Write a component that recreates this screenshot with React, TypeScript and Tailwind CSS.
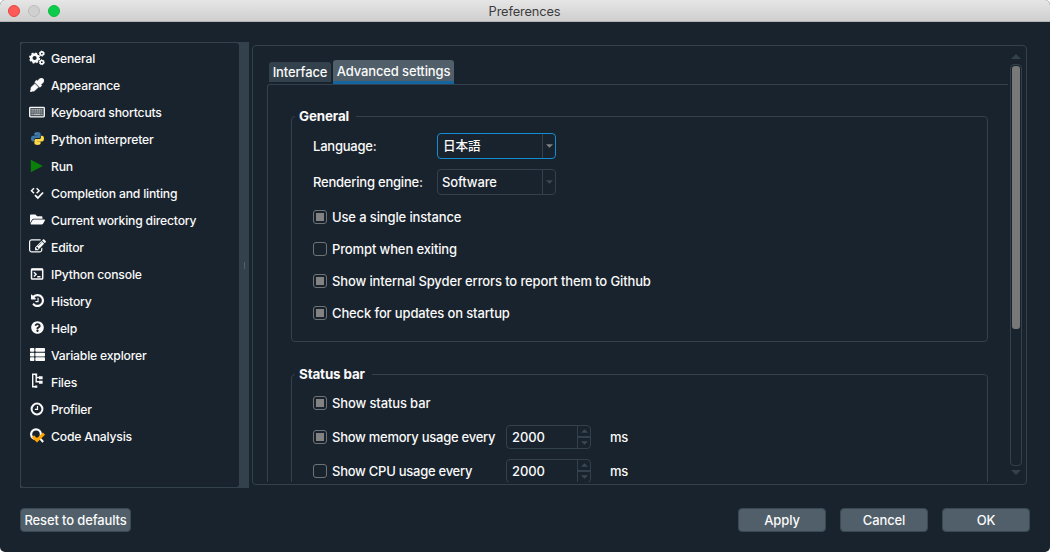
import type { ReactNode } from "react";
import { FaEyeDropper, FaFolderOpen, FaQuestionCircle, FaThList } from "react-icons/fa";

function GearsIcon() {
  return (
    <svg width="16" height="16" viewBox="0 0 16 16" fill="none" stroke="currentColor">
      <circle cx="5.600" cy="8" r="3.400" strokeWidth="2.600" />
      <circle cx="5.600" cy="8" r="4.700" strokeWidth="1.800" strokeDasharray="1.900 1.791" />
      <circle cx="12.800" cy="3.600" r="1.700" strokeWidth="1.600" />
      <circle cx="12.800" cy="3.600" r="2.500" strokeWidth="1" strokeDasharray="1.300 1.318" />
      <circle cx="12.800" cy="12.200" r="1.700" strokeWidth="1.600" />
      <circle cx="12.800" cy="12.200" r="2.500" strokeWidth="1" strokeDasharray="1.300 1.318" />
    </svg>
  );
}

function KeyboardIcon() {
  return (
    <svg width="16" height="12" viewBox="0 0 16 12" fill="none" stroke="currentColor">
      <rect x="0.700" y="1.400" width="14.600" height="9.400" rx="0.800" strokeWidth="1.300" fill="#4d555d" />
      <path d="M2.500 3.900h11M2.500 6h11" strokeWidth="1.100" strokeDasharray="1.300 0.500" opacity="0.750" />
      <path d="M2.500 8.300h1.300M4.500 8.300h7M12.200 8.300h1.300" strokeWidth="1.100" opacity="0.850" />
    </svg>
  );
}

function EditIcon() {
  return (
    <svg width="17" height="17" viewBox="0 0 1792 1792" fill="currentColor" className="shrink-0">
      <path d="M888 1184l116-116-152-152-116 116v56h96v96h56zm440-720q-16-16-33 1l-350 350q-17 17-1 33t33-1l350-350q17-17 1-33zm80 594v190q0 119-84.500 203.500t-203.500 84.500h-832q-119 0-203.500-84.500t-84.500-203.500v-832q0-119 84.500-203.500t203.500-84.500h832q63 0 117 25 15 7 18 23 3 17-9 29l-49 49q-14 14-32 8-23-6-45-6h-832q-66 0-113 47t-47 113v832q0 66 47 113t113 47h832q66 0 113-47t47-113v-126q0-13 9-22l64-64q15-15 35-7t20 29zm-96-738l288 288-672 672h-288v-288zm444 132l-92 92-288-288 92-92q28-28 68-28t68 28l152 152q28 28 28 68t-28 68z" />
    </svg>
  );
}

function HistoryIcon() {
  return (
    <svg width="13" height="13" viewBox="0 -128 1536 1536" fill="currentColor">
      <path d="M1536 640q0 156-61 298t-164 245-245 164-298 61q-172 0-327-72.500t-264-204.500q-7-10-6.500-22.500t8.500-20.500l137-138q10-9 25-9 16 2 23 12 73 95 179 147t225 52q104 0 198.500-40.500t163.500-109.500 109.500-163.500 40.500-198.500-40.500-198.500-109.500-163.500-163.500-109.500-198.500-40.500q-98 0-188 35.500t-160 101.500l137 138q31 30 14 69-17 40-59 40h-448q-26 0-45-19t-19-45v-448q0-42 40-59 39-17 69 14l130 129q107-101 244.500-156.500t284.500-55.500q156 0 298 61t245 164 164 245 61 298zm-640-288v448q0 14-9 23t-23 9h-320q-14 0-23-9t-9-23v-64q0-14 9-23t23-9h224v-352q0-14 9-23t23-9h64q14 0 23 9t9 23z" />
    </svg>
  );
}

function PythonIcon() {
  return (
    <svg width="13" height="13" viewBox="0 0 24 24">
      <path
        fill="#3a77a8"
        d="M11.900 0C8 0 6.300 1.500 6.300 3.200v2.600h5.800v.9H3.600C1.700 6.700 0 8.500 0 12s1.500 5.400 3.400 5.400h2.200v-2.900c0-1.900 1.600-3.300 3.500-3.300h5.800c1.600 0 2.800-1.300 2.800-2.900V3.200C17.700 1.500 15.800 0 11.900 0z"
      />
      <path
        fill="#ffd845"
        d="M18.400 6.700v2.800c0 2-1.600 3.600-3.500 3.600H9.100c-1.600 0-2.800 1.300-2.800 2.900v4.900c0 1.700 1.900 3.100 5.700 3.100s5.700-1.500 5.700-3.100v-2.600h-5.800v-.9h8.700C22.500 17.400 24 15.600 24 12s-1.500-5.300-3.400-5.300z"
      />
      <path fill="#3a77a8" d="M6.300 5.800h5.800v.9H6.300z" />
      <path fill="#ffd845" d="M11.900 17.400h5.800v.9h-5.800z" />
      <circle cx="8.800" cy="2.900" r="0.900" fill="#9dbbd3" />
      <circle cx="15.200" cy="21.100" r="0.900" fill="#fff0b0" />
    </svg>
  );
}

function RunIcon() {
  return (
    <svg width="14" height="14" viewBox="0 0 14 14">
      <path d="M0.800 0.800l12 6.200-12 6.200z" fill="#0a800a" />
    </svg>
  );
}

function LintIcon() {
  return (
    <svg width="14" height="14" viewBox="0 0 14 14" fill="none" stroke="currentColor" strokeWidth="1.500">
      <path d="M4 2.300L1.500 4.800 4 7.300M6.600 2.300l2.500 2.500-2.500 2.500" />
      <path d="M5 9.100l2.800 2.900 5.300-5.500" strokeWidth="1.800" />
    </svg>
  );
}

function ConsoleIcon() {
  return (
    <svg width="14" height="14" viewBox="0 0 14 14" fill="none" stroke="currentColor">
      <rect x="1.500" y="2.100" width="11.200" height="10" rx="0.800" strokeWidth="1.500" />
      <path d="M1.300 2.600h11.600" strokeWidth="1.900" />
      <path d="M3.900 5.200l2.200 2.100-2.200 2.100M7.200 9.700h3.300" strokeWidth="1.400" />
    </svg>
  );
}

function FilesIcon() {
  return (
    <svg width="15" height="17" viewBox="0 0 15 17" fill="none" stroke="currentColor" strokeWidth="1.400">
      <path d="M5.500 1.200H2.700v12.500h2.800M6.200 1.200v8.300M6.200 4.500h4M6.200 8.800h4" />
      <path d="M5.200 1.600h2M4.800 13.600h2.500" strokeWidth="2.200" />
      <path d="M9 4.700h3.600M9 9.200h3.600" strokeWidth="3" />
    </svg>
  );
}

function ClockIcon() {
  return (
    <svg width="14" height="14" viewBox="0 0 14 14" fill="none" stroke="currentColor">
      <circle cx="7" cy="7" r="5.400" strokeWidth="2" />
      <path d="M7.500 3.900v3.500H4.900" strokeWidth="1.200" />
    </svg>
  );
}

function AnalysisIcon() {
  return (
    <svg width="16" height="15" viewBox="0 0 16 15" fill="none" className="shrink-0">
      <circle cx="7" cy="6.300" r="4.900" stroke="#fafafa" strokeWidth="2.200" />
      <path d="M11 10.500l3.200 3.500" stroke="#fafafa" strokeWidth="2" />
      <path d="M4 8.400l4 3.900 7-6.600" stroke="#ffa500" strokeWidth="3" />
    </svg>
  );
}

const pages: { label: string; icon: ReactNode }[] = [
  { label: "General", icon: <GearsIcon /> },
  { label: "Appearance", icon: <FaEyeDropper size={14} stroke="currentColor" strokeWidth={16} /> },
  { label: "Keyboard shortcuts", icon: <KeyboardIcon /> },
  { label: "Python interpreter", icon: <PythonIcon /> },
  { label: "Run", icon: <RunIcon /> },
  { label: "Completion and linting", icon: <LintIcon /> },
  { label: "Current working directory", icon: <FaFolderOpen size={15} /> },
  { label: "Editor", icon: <EditIcon /> },
  { label: "IPython console", icon: <ConsoleIcon /> },
  { label: "History", icon: <HistoryIcon /> },
  { label: "Help", icon: <FaQuestionCircle size={13} /> },
  { label: "Variable explorer", icon: <FaThList size={15} /> },
  { label: "Files", icon: <FilesIcon /> },
  { label: "Profiler", icon: <ClockIcon /> },
  { label: "Code Analysis", icon: <AnalysisIcon /> },
];

function Arrow({ down = false, className }: { down?: boolean; className: string }) {
  return (
    <svg viewBox="0 0 10 5" className={className} fill="currentColor">
      <path d={down ? "M0 0h10L5 5z" : "M0 5h10L5 0z"} />
    </svg>
  );
}

function Check({ label, checked = false }: { label: string; checked?: boolean }) {
  return (
    <div className="flex items-center gap-[5px]">
      <span className="flex size-[14px] items-center justify-center rounded-[3px] border border-[#6d7275]">
        {checked && <span className="size-2 bg-[#828282]" />}
      </span>
      <span className="pt-px">{label}</span>
    </div>
  );
}

function Combo({ value, active = false }: { value: string; active?: boolean }) {
  return (
    <div
      className={
        active
          ? "flex h-[26px] w-[119px] rounded-[4px] border border-[#148cd2] text-[12.600px] font-medium"
          : "flex h-[26px] w-[119px] rounded-[4px] border border-[#32414b]"
      }
    >
      <span className={active ? "flex flex-1 items-center pt-px pl-[5px]" : "flex flex-1 items-center pt-[2px] pl-1"}>
        {value}
      </span>
      <span
        className={
          active
            ? "flex w-[13px] items-center justify-center border-l border-[#32414b] text-[#828282]"
            : "flex w-[13px] items-center justify-center border-l border-[#32414b] text-[#3a4953]"
        }
      >
        <Arrow down className="h-1 w-[7px]" />
      </span>
    </div>
  );
}

function Spin({ value }: { value: string }) {
  return (
    <div className="flex h-6 w-[85px] rounded-[4px] border border-[#32414b]">
      <span className="flex flex-1 items-center pt-px pl-[5px]">{value}</span>
      <span className="flex w-[13px] flex-col border-l border-[#32414b] text-[#3a4953]">
        <span className="flex h-[12px] items-center justify-center border-b-2 border-[#32414b]">
          <Arrow className="h-1 w-[7px]" />
        </span>
        <span className="flex h-[10px] items-center justify-center">
          <Arrow down className="h-1 w-[7px]" />
        </span>
      </span>
    </div>
  );
}

function Interval({ label, checked = false }: { label: string; checked?: boolean }) {
  return (
    <div className="flex h-[34px] items-center">
      <div className="w-[193px] tracking-[-0.020em]">
        <Check label={label} checked={checked} />
      </div>
      <Spin value="2000" />
      <span className="ml-[19px] pt-px tracking-[-0.030em]">ms</span>
    </div>
  );
}

function Button({ label, className }: { label: string; className: string }) {
  return (
    <button
      className={`flex h-6 items-center justify-center rounded-[4px] border border-[#3b4953] bg-[#505f69] pt-[2px] ${className}`}
    >
      {label}
    </button>
  );
}

function Legend({ children }: { children: string }) {
  return (
    <legend className="ml-[3px] h-[18px] pr-[7px] pl-1 text-[13.400px] leading-[18px] font-bold tracking-[-0.010em]">
      {children}
    </legend>
  );
}

export default function App() {
  return (
    <div className="h-[552px] w-[1050px] overflow-hidden bg-white font-['Inter','Noto_Sans_CJK_JP',sans-serif] text-[13px] font-[450] tracking-[-0.010em] text-[#fafafa]">
      <div className="flex h-full flex-col overflow-hidden rounded-[5px] bg-[#19232d]">
        <header className="flex h-[22px] shrink-0 items-center border-b border-[#b4b4b4] bg-gradient-to-b from-[#e6e6e6] to-[#cfcfcf]">
          <div className="flex w-[80px] gap-2 pl-2">
            <span className="size-3 rounded-full border border-[#e2463f] bg-[#fc5b57]" />
            <span className="size-3 rounded-full border border-[#bcbcbc] bg-[#d0d0d0]" />
            <span className="size-3 rounded-full border border-[#13b83f] bg-[#0bcd4b]" />
          </div>
          <h1 className="flex-1 pt-[2px] pr-[81px] text-center text-[12.800px] font-normal text-[#3c3c3c]">Preferences</h1>
        </header>

        <div className="flex h-[466px] shrink-0 pl-5">
          <aside className="mt-5 h-[446px] w-[229px] bg-[#32414b] py-px pl-px">
            <div className="flex h-full">
              <ul className="h-full w-[218px] rounded-[3px] bg-[#19232d] pt-[2px] text-[12.200px] tracking-[-0.016em]">
                {pages.map((page) => (
                  <li key={page.label} className="flex h-[27px] items-center pl-2">
                    <span className="flex w-4 items-center justify-center pb-[2px]">{page.icon}</span>
                    <span className="ml-[6px] pt-px">{page.label}</span>
                  </li>
                ))}
              </ul>
              <div className="flex flex-1 items-center justify-center">
                <span className="h-[7px] w-px bg-[#505f69]" />
              </div>
            </div>
          </aside>

          <main className="mt-[23px] ml-[3px] flex h-[440px] w-[775px] rounded-[4px] border border-[#32414b]">
            <div className="h-[436px] w-[755px] overflow-hidden pt-[14px] pl-[14px]">
              <div className="flex h-6 items-start gap-[2px] pl-[2px]">
                <div className="mt-[2px] flex h-5 w-[62px] items-center justify-center rounded-t-[3px] bg-[#32414b] pt-px">
                  Interface
                </div>
                <div className="flex h-6 w-[121px] items-center justify-center rounded-t-[3px] border-b-[3px] border-[#1464a0] bg-[#505f69] pt-[2px]">
                  Advanced settings
                </div>
              </div>
              <div className="h-[520px] rounded-tl-[3px] border-t border-l border-[#32414b] pt-[22px] pl-[23px]">
                <fieldset className="h-[235px] w-[697px] rounded-[4px] border border-[#32414b]">
                  <Legend>General</Legend>
                  <div className="pl-[21px]">
                    <div className="mt-[8px] flex h-[26px] items-center">
                      <span className="w-[124px] pt-px tracking-[-0.017em]">Language:</span>
                      <Combo value="日本語" active />
                    </div>
                    <div className="mt-[10px] flex h-[26px] items-center">
                      <span className="w-[124px] pt-px tracking-[-0.017em]">Rendering engine:</span>
                      <Combo value="Software" />
                    </div>
                    <div className="mt-[6px] grid auto-rows-[32px] items-center">
                      <Check label="Use a single instance" checked />
                      <Check label="Prompt when exiting" />
                      <Check label="Show internal Spyder errors to report them to Github" checked />
                      <Check label="Check for updates on startup" checked />
                    </div>
                  </div>
                </fieldset>
                <fieldset className="mt-[23px] h-[180px] w-[697px] rounded-[4px] border border-[#32414b]">
                  <Legend>Status bar</Legend>
                  <div className="pt-1 pl-[21px]">
                    <div className="flex h-[33px] items-center pb-px">
                      <Check label="Show status bar" checked />
                    </div>
                    <Interval label="Show memory usage every" checked />
                    <Interval label="Show CPU usage every" />
                  </div>
                </fieldset>
              </div>
            </div>
            <div className="ml-[2px] flex w-[12px] flex-col items-center text-[#32414b]">
              <Arrow className="mt-[8px] h-[5px] w-[10px] shrink-0" />
              <div className="mt-[5px] h-[402px] w-[12px] shrink-0 rounded-[4px] border border-[#32414b] p-px">
                <div className="h-[263px] w-full rounded-[3px] bg-[#787878]" />
              </div>
              <Arrow down className="mt-[4px] h-[5px] w-[10px] shrink-0" />
            </div>
          </main>
        </div>

        <footer className="flex pt-5 pr-5 pl-5">
          <Button label="Reset to defaults" className="w-[111px]" />
          <div className="ml-auto flex gap-[14px]">
            <Button label="Apply" className="w-[88px]" />
            <Button label="Cancel" className="w-[88px]" />
            <Button label="OK" className="w-[88px]" />
          </div>
        </footer>
      </div>
    </div>
  );
}
